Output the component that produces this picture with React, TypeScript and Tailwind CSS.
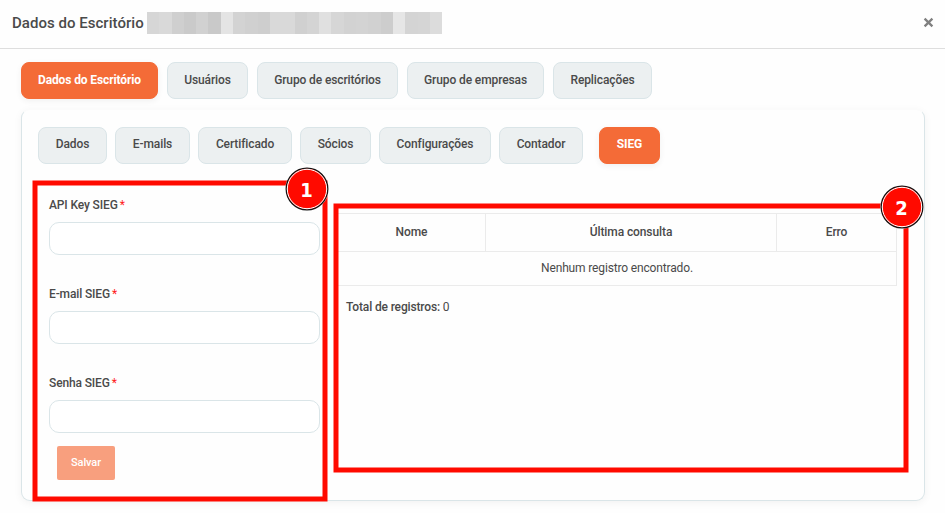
type TabItem = { label: string; width: string; active?: boolean };

const mainTabs: TabItem[] = [
  { label: "Dados do Escritório", width: "w-[137px]", active: true },
  { label: "Usuários", width: "w-[81px]" },
  { label: "Grupo de escritórios", width: "w-[141px]" },
  { label: "Grupo de empresas", width: "w-[137px]" },
  { label: "Replicações", width: "w-[99px]" },
];

const subTabs: TabItem[] = [
  { label: "Dados", width: "w-[69px]" },
  { label: "E-mails", width: "w-[75px]" },
  { label: "Certificado", width: "w-[94px]" },
  { label: "Sócios", width: "w-[71px]" },
  { label: "Configurações", width: "w-[112px]" },
  { label: "Contador", width: "w-[84px]" },
  { label: "SIEG", width: "ml-2 w-[61px]", active: true },
];

const redacted = [
  "bg-[#d6d6d6]", "bg-[#d9d9d9]", "bg-[#cfcfcf]", "bg-[#cacaca]", "bg-[#d1d1d1]", "bg-[#c9c9c9]",
  "bg-[#e4e4e4]", "bg-[#d3d3d3]", "bg-[#d0d0d0]", "bg-[#cecece]", "bg-[#d9d9d9]", "bg-[#d9d9d9]",
  "bg-[#d0d0d0]", "bg-[#d4d4d4]", "bg-[#e0e0e0]", "bg-[#d6d6d6]", "bg-[#d2d2d2]", "bg-[#d3d3d3]",
  "bg-[#d1d1d1]", "bg-[#cdcdcd]", "bg-[#e6e6e6]", "bg-[#d4d4d4]", "bg-[#d5d5d5]", "bg-[#dcdcdc]",
];

function Tab({ label, width, active, pad }: TabItem & { pad: string }) {
  const look = active
    ? "border-[#f46b37] bg-[#f46b37] font-bold text-white shadow-[0_2px_6px_rgba(0,0,0,0.06)]"
    : "border-[#dae5e8] bg-[#ecf0f1] font-medium text-[#4a4a4a]";
  return (
    <button className={`h-[37px] shrink-0 rounded-lg border text-xs tracking-[-0.11px] whitespace-nowrap ${pad} ${look} ${width}`}>
      {label}
    </button>
  );
}

function Field({ label }: { label: string }) {
  return (
    <label className="block h-[89px]">
      <span className="block h-[26px] pt-px text-xs leading-4 font-medium tracking-[-0.13px]">
        {label}
        <span className="ml-0.5 font-normal text-[#ff1c1c]">*</span>
      </span>
      <input className="block h-[33px] w-[271px] rounded-[10px] border border-[#dae5e8] bg-white px-3 outline-none" />
    </label>
  );
}

function Callout({ x, y, value }: { x: number; y: number; value: string }) {
  return (
    <g>
      <circle cx={x} cy={y} r="21.7" fill="#fff" />
      <circle cx={x} cy={y} r="20.8" fill="#ff0a00" stroke="#111" strokeWidth="1.3" />
      <circle cx={x} cy={y} r="19.7" fill="none" stroke="#fff" strokeWidth="1" />
      <text
        x={x - 0.5}
        y={y + 8}
        textAnchor="middle"
        fill="#fff"
        className="font-['DejaVu_Sans_Condensed','DejaVu_Sans',sans-serif] text-xl font-bold [font-stretch:semi-condensed]"
      >
        {value}
      </text>
    </g>
  );
}

export default function App() {
  return (
    <div className="relative h-[513px] w-[945px] overflow-hidden bg-[#fefefe] font-[Roboto,sans-serif] text-[#4a4a4a]">
      <header className="flex h-[49px] items-center border-b border-[#dedede] pr-[11px] pb-[2px] pl-3">
        <h1 className="w-[135px] text-[15px] font-medium tracking-[0.03px] whitespace-nowrap">Dados do Escritório</h1>
        <div className="flex h-[22px] w-[295px]">
          {redacted.map((tone, i) => (
            <span key={i} className={`flex-1 ${tone}`} />
          ))}
        </div>
        <button aria-label="Fechar" className="ml-auto pb-px">
          <svg width="11" height="11" viewBox="0 0 11 11" fill="none" stroke="#808080" strokeWidth="2.3">
            <path d="M1.6 1.6 9.4 9.4M9.4 1.6 1.6 9.4" />
          </svg>
        </button>
      </header>

      <nav className="flex gap-[9px] pt-[13px] pl-[21px]">
        {mainTabs.map((t) => (
          <Tab key={t.label} {...t} pad="pb-px" />
        ))}
      </nav>

      <main className="mt-[10px] ml-[21px] h-[392px] w-[904px] rounded-[9px] border border-t-[#fbfbfb] border-r-[#dae5e8] border-b-[#dae5e8] border-l-[#dae5e8] bg-[#fefefe] shadow-[0_2px_8px_rgba(0,0,0,0.05)]">
        <nav className="flex gap-2 pt-[17px] pl-4">
          {subTabs.map((t) => (
            <Tab key={t.label} {...t} pad="pb-[3px]" />
          ))}
        </nav>
        <div className="flex">
          <form className="w-[315px] pt-8 pl-[27px]">
            <Field label="API Key SIEG" />
            <Field label="E-mail SIEG" />
            <Field label="Senha SIEG" />
            <button type="button" className="-mt-[17px] ml-2 block h-[34px] w-[58px] rounded-[2px] bg-[#f89f7e] pt-px text-[11px] font-medium tracking-[-0.1px] text-white">
              Salvar
            </button>
          </form>
          <section className="pt-[49px] text-xs">
            <table className="w-[560px] table-fixed border-collapse text-center">
              <thead>
                <tr className="h-[38px] font-medium tracking-[-0.1px]">
                  <th className="w-[148px] border border-[#ebebeb] pb-[2px] font-medium">Nome</th>
                  <th className="w-[291px] border border-[#ebebeb] pb-[2px] font-medium">Última consulta</th>
                  <th className="border border-[#ebebeb] pb-[2px] font-medium">Erro</th>
                </tr>
              </thead>
              <tbody>
                <tr className="h-[34px]">
                  <td colSpan={3} className="border border-[#ebebeb] pb-[2px] tracking-[-0.15px]">Nenhum registro encontrado.</td>
                </tr>
              </tbody>
            </table>
            <p className="mt-[13px] ml-[9px] leading-4 tracking-[-0.15px]">
              <span className="font-medium">Total de registros:</span> 0
            </p>
          </section>
        </div>
      </main>

      <svg className="pointer-events-none absolute inset-0" width="945" height="513">
        <g fill="none" stroke="#ff0a00" strokeWidth="5">
          <rect x="35" y="183" width="290" height="316" />
          <rect x="336" y="206" width="570" height="264" />
        </g>
        <Callout x={307} y={189} value="1" />
        <Callout x={902} y={207} value="2" />
      </svg>
    </div>
  );
}
